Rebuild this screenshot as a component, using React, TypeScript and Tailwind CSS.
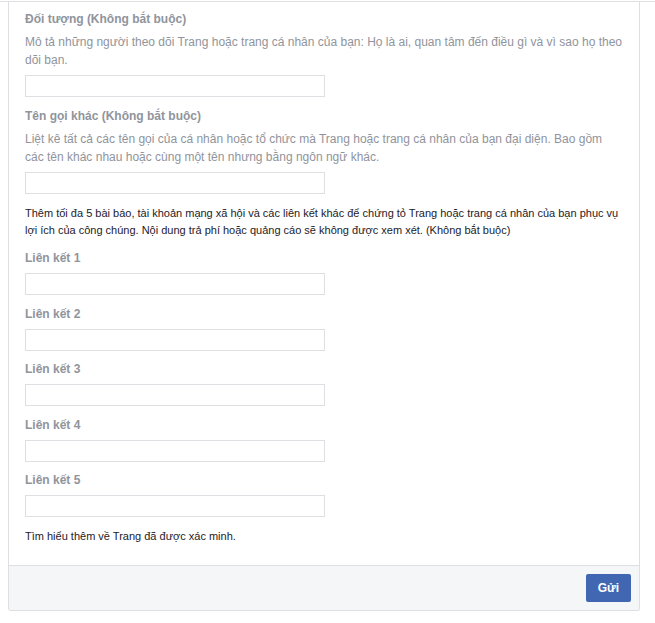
import React from 'react';

const links = [1, 2, 3, 4, 5];

function Field() {
  return <input type="text" className="block w-[300px] h-[22px] border border-[#dddfe2] bg-white outline-none" />;
}

export default function App() {
  return (
    <div className="min-h-[623px] bg-white font-['Liberation_Sans',Arial,sans-serif] text-[12px]">
      <div className="h-[2px] border-b border-[#dddfe2]" />
      <div className="ml-2 w-[632px] border-x border-b border-[#dddfe2] rounded-b-[3px] bg-white">
        <div className="pl-4 pr-4 pt-[9px] pb-[20px]">
          <div className="font-bold text-[#90949c] leading-[16px]">Đối tượng (Không bắt buộc)</div>
          <div className="mt-[6px] text-[#90949c] leading-[18px]">
            Mô tả những người theo dõi Trang hoặc trang cá nhân của bạn: Họ là ai, quan tâm đến điều gì và vì sao họ theo dõi bạn.
          </div>
          <div className="mt-[6px]">
            <Field />
          </div>

          <div className="mt-[11px] font-bold text-[#90949c] leading-[16px]">Tên gọi khác (Không bắt buộc)</div>
          <div className="mt-[6px] text-[#90949c] leading-[18px]">
            Liệt kê tất cả các tên gọi của cá nhân hoặc tổ chức mà Trang hoặc trang cá nhân của bạn đại diện. Bao gồm các tên khác nhau hoặc cùng một tên nhưng bằng ngôn ngữ khác.
          </div>
          <div className="mt-[6px]">
            <Field />
          </div>

          <div className="mt-[11px] text-[#1d2129] text-[11px] leading-[17px]">
            Thêm tối đa 5 bài báo, tài khoản mạng xã hội và các liên kết khác để chứng tỏ Trang hoặc trang cá nhân của bạn phục vụ lợi ích của công chúng. Nội dung trả phí hoặc quảng cáo sẽ không được xem xét. (Không bắt buộc)
          </div>

          {links.map((n) => (
            <div key={n} className={n === 1 ? 'mt-[11px]' : n % 2 === 0 ? 'mt-[11px]' : 'mt-[10px]'}>
              <div className="font-bold text-[#90949c] leading-[16px]">Liên kết {n}</div>
              <div className="mt-[7px]">
                <Field />
              </div>
            </div>
          ))}

          <div className="mt-[11px] text-[#1d2129] text-[11px] leading-[17px]">Tìm hiểu thêm về Trang đã được xác minh.</div>
        </div>
        <div className="flex justify-end border-t border-[#dddfe2] bg-[#f5f6f7] p-2 rounded-b-[3px]">
          <button className="h-[28px] px-3 rounded-[2px] bg-[#4267b2] text-white font-bold text-[12px]">Gửi</button>
        </div>
      </div>
    </div>
  );
}
